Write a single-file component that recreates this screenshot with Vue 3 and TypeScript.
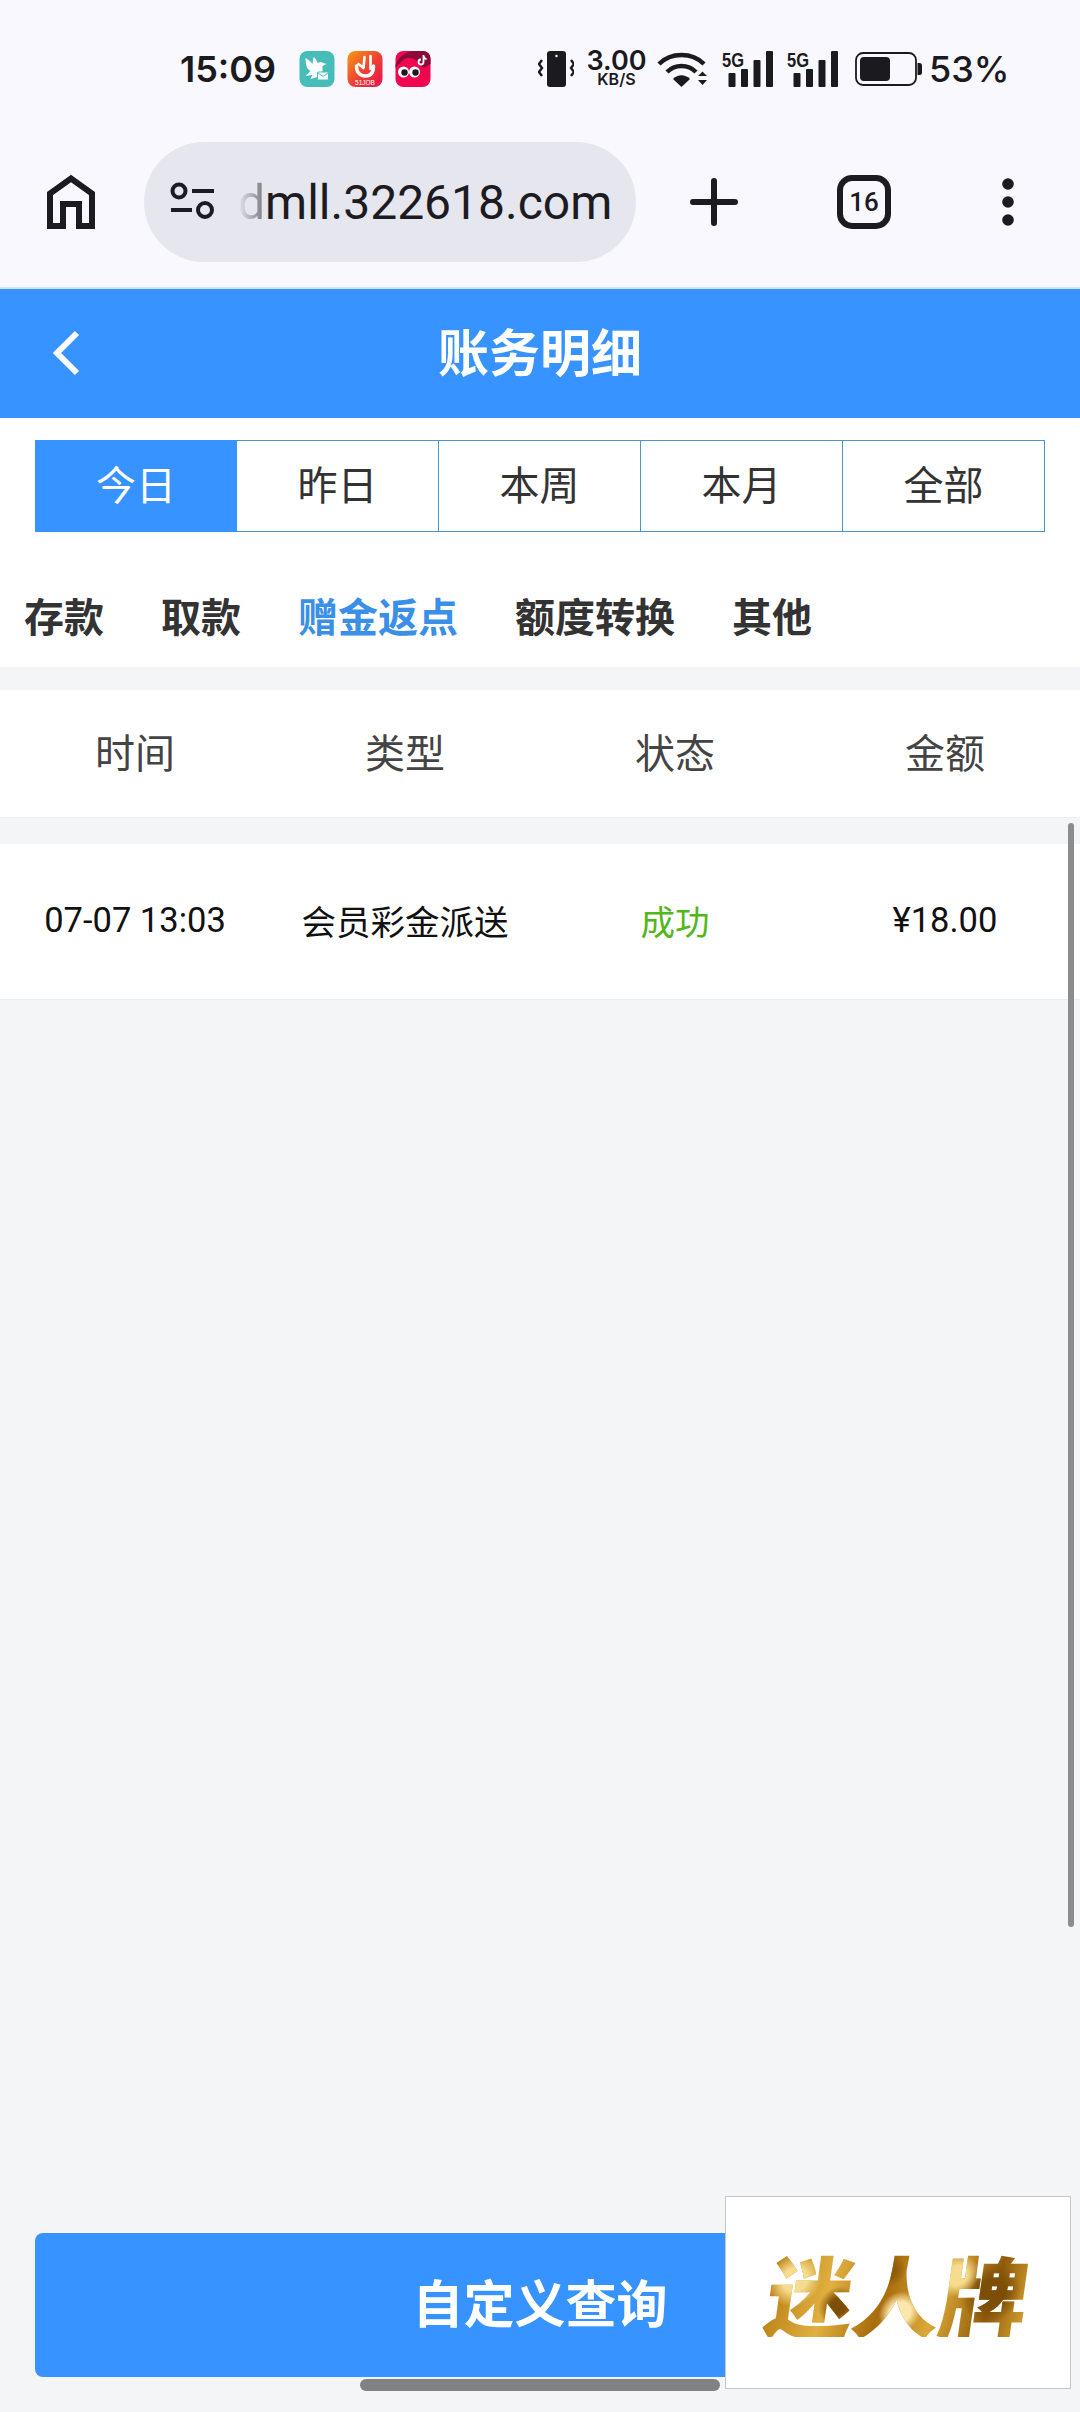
<script setup lang="ts">
import { ref } from 'vue'

const ranges = ['今日', '昨日', '本周', '本月', '全部']
const kinds = ['存款', '取款', '赠金返点', '额度转换', '其他']
const columns = ['时间', '类型', '状态', '金额']

const activeRange = ref(0)
const activeKind = ref(2)

const records = [
  { id: 1, time: '07-07 13:03', type: '会员彩金派送', status: '成功', amount: '¥18.00' },
]
</script>

<template>
  <div class="page">
    <header class="chrome">
      <div class="status">
        <span class="clock">15:09</span>
        <div class="notify">
          <svg class="app" viewBox="0 0 35 36">
            <rect width="35" height="36" rx="8" fill="#46bdb8" />
            <path d="M6 7c3 2 5 3 7 6l1-7c2 1 3 3 4 6l3-1 6 2-4 2v5l-5 6-7 2 2-4-7 1 5-5c-4-2-5-7-5-13z" fill="#fff" />
            <rect x="18" y="21" width="11" height="8" rx="1" fill="#fff" stroke="#46bdb8" />
            <path d="M18.500 22l5 3.500 5-3.500" fill="none" stroke="#46bdb8" />
          </svg>
          <svg class="app" viewBox="0 0 35 36">
            <defs>
              <linearGradient id="jobBg" x1="0" y1="0" x2="1" y2="1">
                <stop offset="0" stop-color="#f79a10" />
                <stop offset="0.55" stop-color="#ee3d35" />
                <stop offset="1" stop-color="#e8124f" />
              </linearGradient>
            </defs>
            <rect width="35" height="36" rx="8" fill="url(#jobBg)" />
            <path d="M9 15c0 7 4 10 9 10s8-3 8-10" fill="none" stroke="#fff" stroke-width="3.400" stroke-linecap="round" />
            <path d="M17 6l-1 11M23 5v13M11 13l5 4" fill="none" stroke="#fff" stroke-width="2.600" stroke-linecap="round" />
            <text x="17.500" y="33.500" text-anchor="middle" class="job">51JOB</text>
          </svg>
          <svg class="app" viewBox="0 0 35 36">
            <rect width="35" height="36" rx="8" fill="#f0054f" />
            <path d="M0 14C4 4 12 0 20 0h7c5 0 8 3 8 8v5l-7 4-8-6C13 6 6 9 0 17z" fill="#8a0a3a" />
            <path d="M6 15c1-9 14-9 16 0" fill="none" stroke="#f0054f" stroke-width="3" />
            <path d="M28 4v7a2.500 2.500 0 1 1-2.500-2.500M28 5c.5 2 2 3 3 3" fill="none" stroke="#fff" stroke-width="1.800" />
            <circle cx="8" cy="21" r="5.500" fill="#fff" />
            <circle cx="19" cy="21" r="5.500" fill="#fff" />
            <circle cx="9" cy="21.500" r="3.200" fill="#1a1a1a" />
            <circle cx="20" cy="21.500" r="3.200" fill="#1a1a1a" />
          </svg>
        </div>
        <div class="sys">
          <svg class="vibrate" viewBox="0 0 36 36">
            <rect x="9" y="0" width="19" height="36" rx="3" fill="#1b1b1f" />
            <circle cx="18.500" cy="5" r="1.200" fill="#f8f8fe" />
            <path d="M4 9L1 13l3 4-3 4 3 4M33 9l3 4-3 4 3 4-3 4" fill="none" stroke="#1b1b1f" stroke-width="2.400" />
          </svg>
          <div class="speed"><b>3.00</b><i>KB/S</i></div>
          <svg class="wifi" viewBox="0 0 51 36">
            <path d="M2 13C14 1 35 1 47 13" fill="none" stroke="#1b1b1f" stroke-width="4.500" />
            <path d="M10 21c8-8 21-8 29 0" fill="none" stroke="#1b1b1f" stroke-width="4.500" />
            <path d="M16 28c5-5 12-5 17 0l-8.500 8z" fill="#1b1b1f" />
            <path d="M41 25l4.500-4.500L50 25zM41 29h9l-4.500 5z" fill="#1b1b1f" />
          </svg>
          <svg v-for="n in 2" :key="n" class="signal" viewBox="0 0 51 36">
            <text x="0" y="16" class="five" textLength="22" lengthAdjust="spacingAndGlyphs">5G</text>
            <rect x="6.500" y="22" width="7" height="14" rx="1" fill="#1b1b1f" />
            <rect x="19" y="18" width="7" height="18" rx="1" fill="#1b1b1f" />
            <rect x="31.500" y="9" width="7" height="27" rx="1" fill="#1b1b1f" />
            <rect x="44" y="0" width="7" height="36" rx="1" fill="#1b1b1f" />
          </svg>
          <svg class="battery" viewBox="0 0 67 34">
            <rect x="1" y="1" width="60" height="32" rx="7" fill="none" stroke="#1b1b1f" stroke-width="1.800" />
            <rect x="5" y="5" width="30" height="24" rx="4" fill="#1b1b1f" />
            <path d="M62.500 11h2a2.500 2.500 0 0 1 2.500 2.500v7a2.500 2.500 0 0 1-2.500 2.500h-2z" fill="#1b1b1f" />
          </svg>
          <span class="level">53%</span>
        </div>
      </div>

      <div class="toolbar">
        <svg class="home" viewBox="0 0 48 54">
          <path d="M3 51V18.500L24 3.500l21 15V51H32V29H16v22z" fill="none" stroke="#1b1b21" stroke-width="6" />
        </svg>
        <div class="omnibox">
          <svg class="site" viewBox="0 0 44 40">
            <circle cx="9" cy="9" r="6.500" fill="none" stroke="#1b1b21" stroke-width="4" />
            <path d="M22 9h22M1 28h21" stroke="#1b1b21" stroke-width="4" />
            <circle cx="35" cy="28" r="7" fill="none" stroke="#1b1b21" stroke-width="4" />
          </svg>
          <span class="url"><span class="fade">d</span>mll.322618.com</span>
        </div>
        <svg class="plus" viewBox="0 0 48 48">
          <path d="M24 3v42M3 24h42" stroke="#1b1b21" stroke-width="6" stroke-linecap="round" />
        </svg>
        <div class="tab-count">16</div>
        <svg class="more" viewBox="0 0 12 48">
          <circle cx="6" cy="6" r="5.800" fill="#1b1b21" />
          <circle cx="6" cy="24" r="5.800" fill="#1b1b21" />
          <circle cx="6" cy="42" r="5.800" fill="#1b1b21" />
        </svg>
      </div>
    </header>

    <div class="title-bar">
      <svg class="back" viewBox="0 0 28 46">
        <path d="M25 3L5 23l20 20" fill="none" stroke="#fff" stroke-width="6" />
      </svg>
      <h1>账务明细</h1>
    </div>

    <div class="ranges">
      <div
        v-for="(item, i) in ranges"
        :key="item"
        class="range"
        :class="{ on: i === activeRange }"
        @click="activeRange = i"
      >
        {{ item }}
      </div>
    </div>

    <nav class="kinds">
      <span
        v-for="(item, i) in kinds"
        :key="item"
        class="kind"
        :class="{ on: i === activeKind }"
        @click="activeKind = i"
      >
        {{ item }}
      </span>
    </nav>

    <div class="table-head">
      <span v-for="col in columns" :key="col">{{ col }}</span>
    </div>

    <main class="list">
      <div v-for="rec in records" :key="rec.id" class="row">
        <span>{{ rec.time }}</span>
        <span>{{ rec.type }}</span>
        <span class="ok">{{ rec.status }}</span>
        <span>{{ rec.amount }}</span>
      </div>
    </main>

    <footer class="foot">
      <button class="query">自定义查询</button>
    </footer>

    <div class="scrollbar"></div>
    <div class="float-logo"><span>迷人牌</span></div>
    <div class="home-bar"></div>
  </div>
</template>

<style scoped>
.page {
  position: relative;
  width: 1080px;
  height: 2412px;
  overflow: hidden;
  display: flex;
  flex-direction: column;
  background: #f4f5f7;
  font-family: "Noto Sans CJK SC", Roboto, sans-serif;
}

/* browser chrome */
.chrome {
  height: 287px;
  flex: none;
  background: #f8f8fe;
  display: flex;
  flex-direction: column;
}
.status {
  height: 137px;
  display: flex;
  align-items: center;
  padding-left: 180px;
}
.clock {
  width: 119px;
  font-family: Inter, sans-serif;
  font-weight: 600;
  font-size: 36px;
  color: #1b1b1f;
}
.notify {
  display: flex;
  gap: 12px;
}
.app {
  width: 36px;
  height: 36px;
  display: block;
}
.job {
  font-family: "Liberation Sans", sans-serif;
  font-size: 6.500px;
  fill: #fff;
}
.sys {
  margin-left: 107px;
  display: flex;
  align-items: center;
}
.vibrate {
  width: 36px;
  height: 36px;
}
.speed {
  width: 57px;
  margin-left: 14px;
  display: flex;
  flex-direction: column;
  align-items: center;
  font-family: Inter, sans-serif;
  color: #1b1b1f;
}
.speed b {
  font-size: 27px;
  line-height: 22px;
  font-weight: 600;
}
.speed i {
  font-style: normal;
  font-size: 16px;
  line-height: 15px;
  font-weight: 600;
}
.wifi {
  width: 51px;
  height: 36px;
  margin-left: 12px;
}
.signal {
  width: 51px;
  height: 36px;
  margin-left: 14px;
  overflow: visible;
}
.five {
  font-family: "Liberation Sans", sans-serif;
  font-weight: 700;
  font-size: 21px;
  fill: #1b1b1f;
}
.battery {
  width: 67px;
  height: 34px;
  margin-left: 17px;
}
.level {
  margin-left: 7px;
  font-family: Inter, sans-serif;
  font-weight: 500;
  font-size: 36px;
  color: #1b1b1f;
}

.toolbar {
  height: 130px;
  display: flex;
  align-items: center;
  padding-left: 47px;
}
.home {
  width: 48px;
  height: 54px;
  flex: none;
}
.omnibox {
  width: 492px;
  height: 120px;
  margin-left: 49px;
  flex: none;
  border-radius: 60px;
  background: #e6e6ee;
  display: flex;
  align-items: center;
  padding-left: 26px;
  box-sizing: border-box;
}
.site {
  width: 44px;
  height: 40px;
}
.url {
  margin-left: 24px;
  font-family: Roboto, sans-serif;
  font-size: 48px;
  color: #1b1b21;
  white-space: nowrap;
}
.fade {
  background: linear-gradient(90deg, #e4e4ea, #77777d);
  -webkit-background-clip: text;
  background-clip: text;
  color: transparent;
}
.plus {
  width: 48px;
  height: 48px;
  margin-left: 54px;
  flex: none;
}
.tab-count {
  width: 54px;
  height: 54px;
  margin-left: 99px;
  box-sizing: border-box;
  flex: none;
  border: 6px solid #1b1b21;
  border-radius: 15px;
  display: flex;
  align-items: center;
  justify-content: center;
  font-family: Roboto, sans-serif;
  font-weight: 500;
  font-size: 26px;
  color: #1b1b21;
}
.more {
  width: 12px;
  height: 48px;
  margin-left: 111px;
  flex: none;
}

/* page header */
.title-bar {
  position: relative;
  height: 129px;
  flex: none;
  margin-top: 2px;
  background: #3793ff;
  display: flex;
  align-items: center;
  justify-content: center;
}
.title-bar h1 {
  margin: 0 0 8px;
  font-size: 51px;
  font-weight: 700;
  color: #fff;
}
.back {
  position: absolute;
  left: 52px;
  top: 41px;
  width: 28px;
  height: 46px;
}
.title-bar::before {
  content: "";
  position: absolute;
  left: 0;
  right: 0;
  top: -2px;
  height: 2px;
  background: #cfe3f6;
}

.ranges {
  display: grid;
  grid-template-columns: repeat(5, 1fr);
  padding: 22px 35px 0;
  background: #fff;
  flex: none;
}
.range {
  height: 92px;
  box-sizing: border-box;
  border: 1px solid #4a94d0;
  border-left: 0;
  padding-bottom: 6px;
  display: flex;
  align-items: center;
  justify-content: center;
  font-size: 40px;
  color: #333;
}
.range:first-child {
  border-left: 1px solid #4a94d0;
}
.range.on {
  background: #3793ff;
  border-color: #3793ff;
  color: #fff;
}

.kinds {
  height: 135px;
  flex: none;
  background: #fff;
  display: flex;
  align-items: center;
  gap: 57px;
  padding-left: 24px;
  padding-top: 61px;
  padding-bottom: 30px;
  box-sizing: border-box;
  font-size: 40px;
  font-weight: 700;
  color: #333;
}
.kind.on {
  color: #3a8fe8;
}

.table-head,
.row {
  display: grid;
  grid-template-columns: repeat(4, 1fr);
  align-items: center;
  justify-items: center;
  background: #fff;
}
.table-head {
  height: 128px;
  flex: none;
  margin-top: 23px;
  padding-bottom: 6px;
  border-bottom: 1px solid #eceef0;
  box-sizing: border-box;
  font-size: 40px;
  color: #444;
}

.list {
  flex: 1;
  padding-top: 26px;
}
.row {
  height: 156px;
  padding-bottom: 4px;
  font-size: 34.500px;
  color: #111;
  font-family: Roboto, "Noto Sans CJK SC", sans-serif;
  border-bottom: 1px solid #eceef0;
  box-sizing: border-box;
}
.ok {
  color: #52b81a;
}

.foot {
  flex: none;
  padding: 0 35px 35px;
}
.query {
  display: block;
  width: 100%;
  height: 144px;
  padding: 0 0 9px;
  border: 0;
  border-radius: 8px;
  background: #3793ff;
  color: #fff;
  font-family: inherit;
  font-size: 51px;
  font-weight: 700;
}

/* overlays */
.scrollbar {
  position: absolute;
  left: 1068px;
  top: 823px;
  width: 6px;
  height: 1104px;
  border-radius: 3px;
  background: #8a8c8e;
}
.float-logo {
  position: absolute;
  left: 725px;
  top: 2196px;
  width: 346px;
  height: 193px;
  box-sizing: border-box;
  border: 1px solid #c4c6c8;
  background: #fff;
  display: flex;
  align-items: center;
  justify-content: center;
}
.float-logo span {
  font-size: 88px;
  line-height: 1;
  font-weight: 900;
  letter-spacing: -1px;
  transform: skewX(-8deg);
  background:
    radial-gradient(circle at 10% 35%, #f6dc8e 0 5%, transparent 11%),
    radial-gradient(circle at 28% 65%, #7d4e08 0 4%, transparent 10%),
    radial-gradient(circle at 52% 72%, #fbe7ae 0 7%, transparent 14%),
    radial-gradient(circle at 46% 25%, #8f5c0a 0 4%, transparent 10%),
    radial-gradient(circle at 72% 30%, #f6dc8e 0 5%, transparent 11%),
    radial-gradient(circle at 86% 50%, #7d4e08 0 6%, transparent 13%),
    linear-gradient(100deg, #b67a10, #e0b040 25%, #a86c0c 45%, #dca838 65%, #8f5c0a 85%, #d7a232);
  -webkit-background-clip: text;
  background-clip: text;
  color: transparent;
}
.home-bar {
  position: absolute;
  left: 360px;
  top: 2379px;
  width: 360px;
  height: 12px;
  border-radius: 6px;
  background: #808284;
}
</style>
